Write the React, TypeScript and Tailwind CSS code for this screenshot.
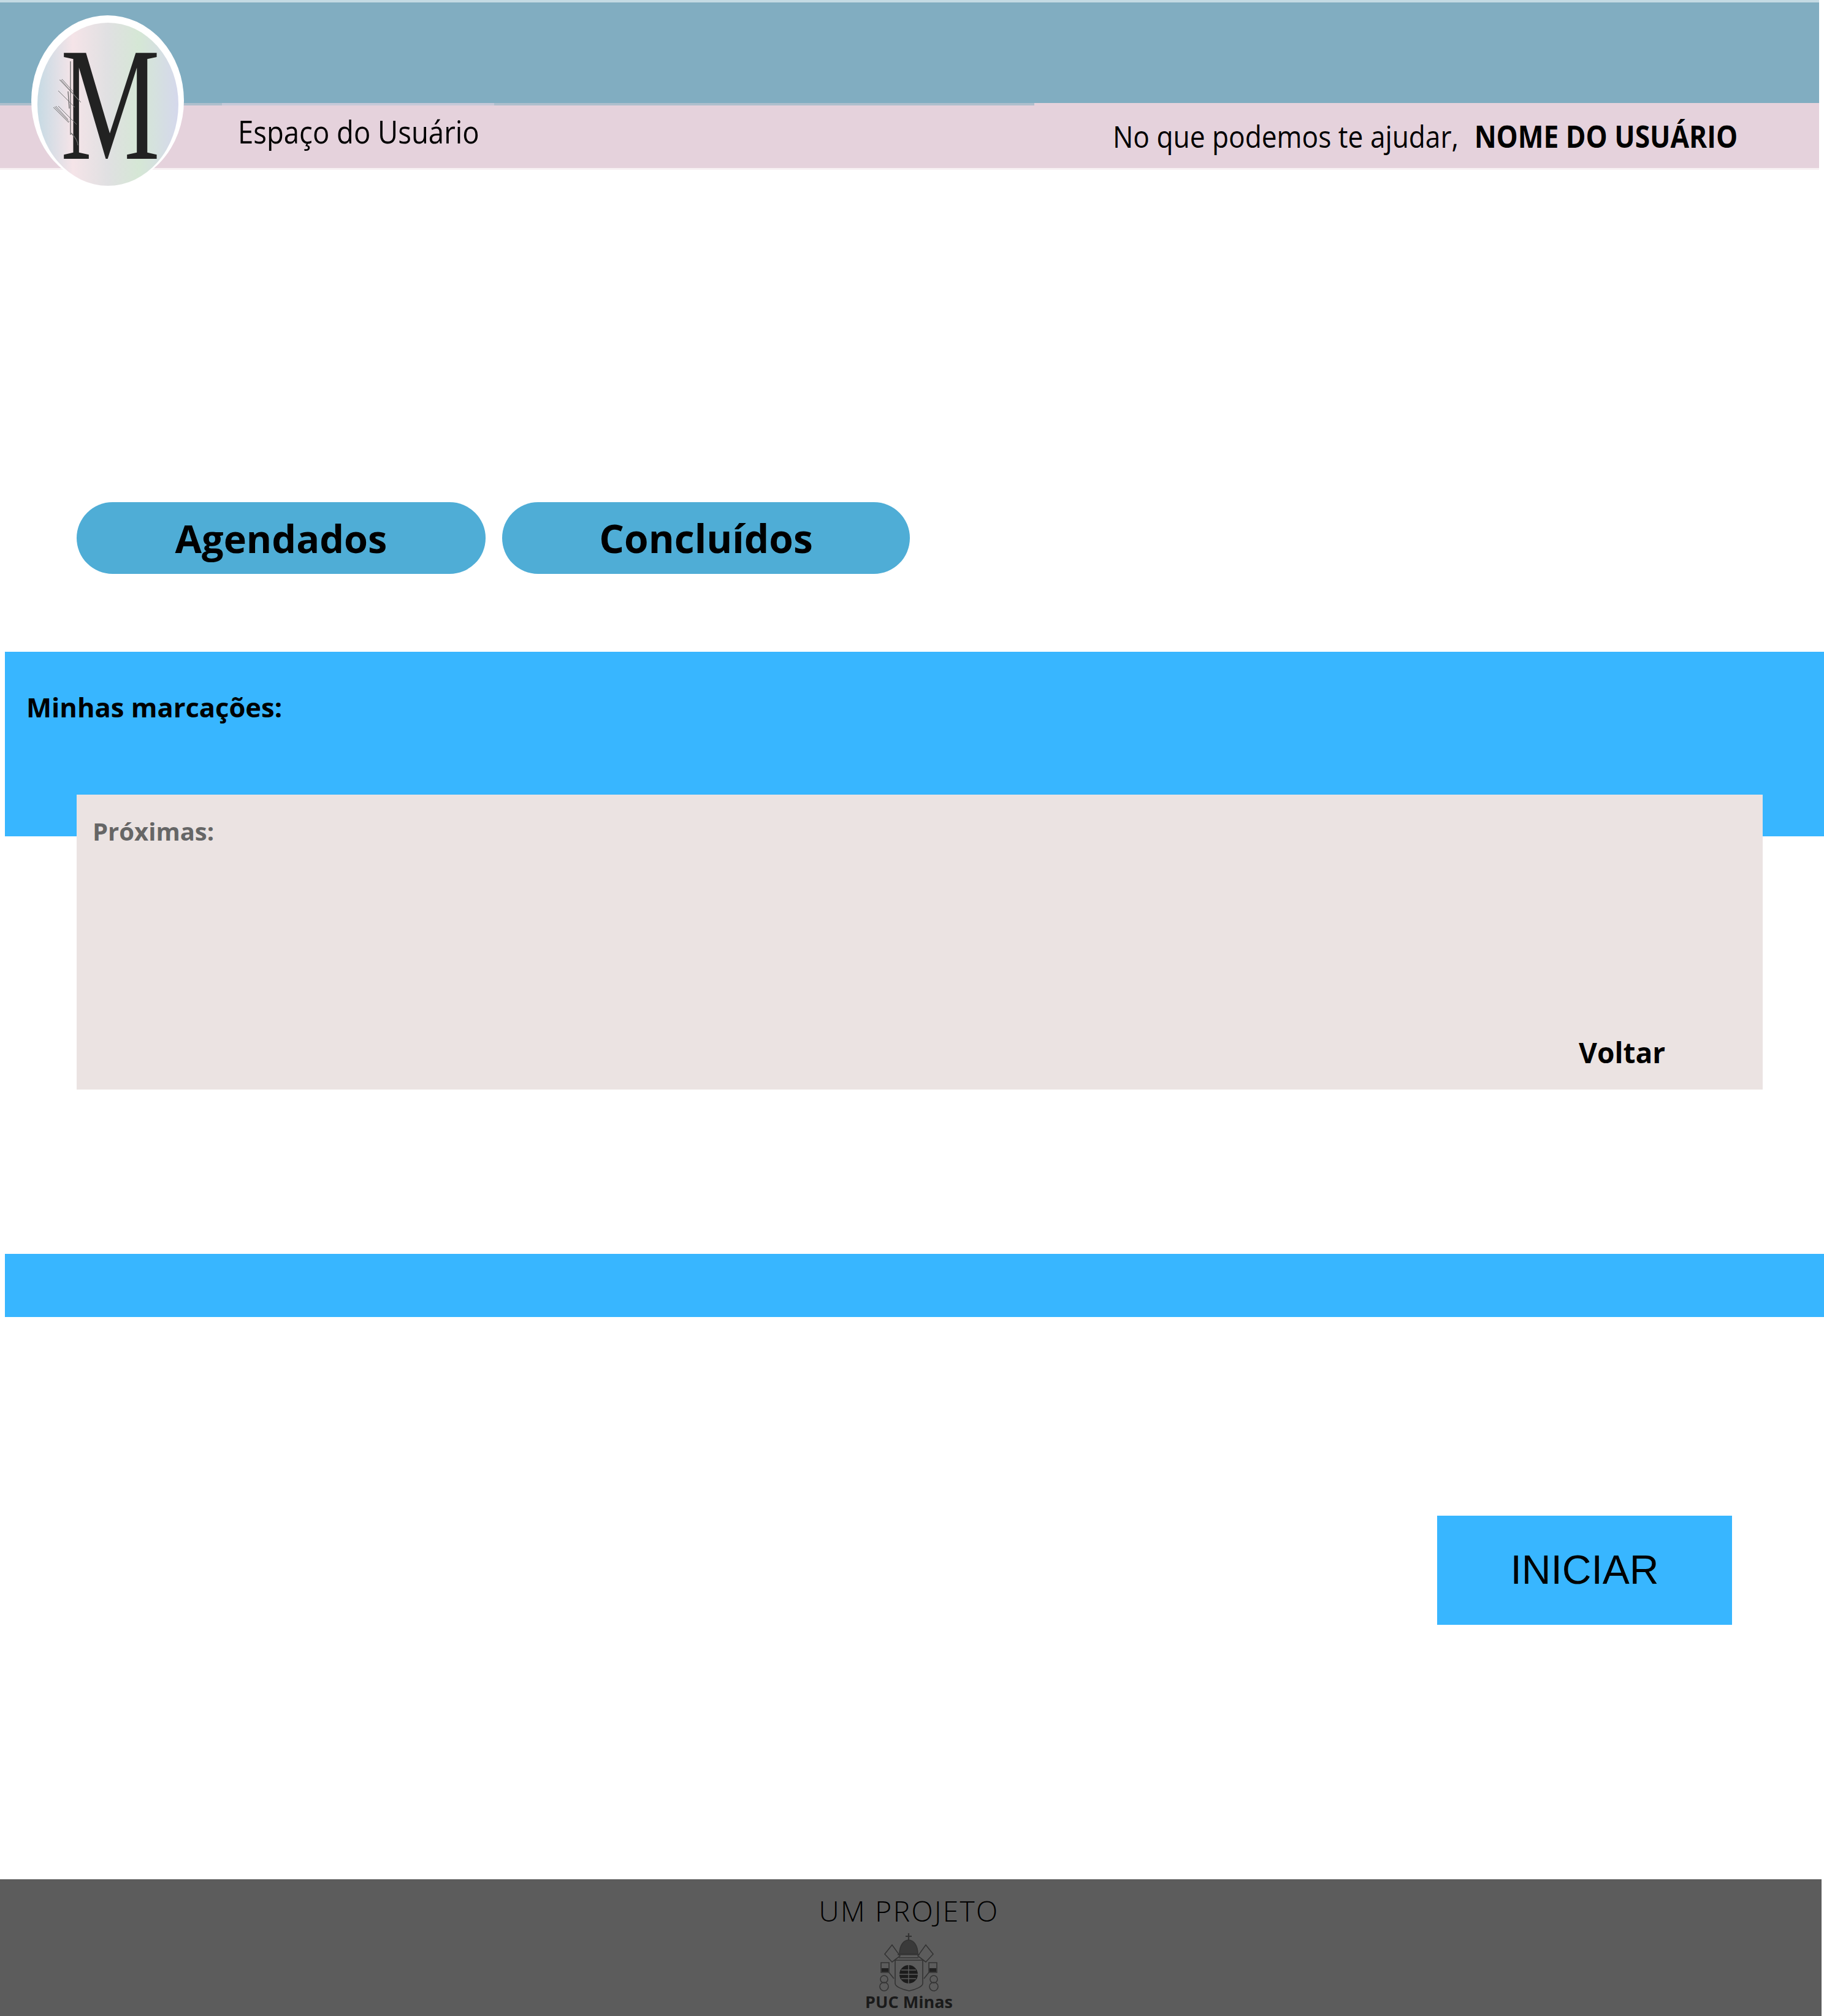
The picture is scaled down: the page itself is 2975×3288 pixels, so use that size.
function MLogo() {
  return (
    <div className="absolute left-[51px] top-[25px] w-[249px] h-[278px] rounded-[50%] bg-white flex items-end justify-center">
      <div className="relative w-[230px] h-[266px] rounded-[50%] bg-[linear-gradient(90deg,#c6dae4_0%,#f5e4e8_25%,#e0e0e2_50%,#d5e7d5_72%,#d5d8ec_100%)]">
        <span className="absolute left-[6px] top-[1px] w-[206px] text-center text-[264px] leading-none text-[#222222] origin-center scale-x-[0.69] [font-family:'Liberation_Serif',serif]">M</span>
        <svg className="absolute left-0 top-0 w-[230px] h-[266px]" viewBox="0 0 230 266" fill="none" stroke="#777777" strokeWidth="1">
          <path d="M36 93l35 37M38 93l32 36M40 92l18 20M34 111l27 27M26 138l25 25M28 137l24 25M30 136l20 22M34 136l30 30" />
          <path d="M54 63v120M55 180c6 6 11 12 11 20M50 112l2 28" strokeWidth="1.3" stroke="#666666" />
        </svg>
      </div>
    </div>
  );
}

function PucCrest() {
  return (
    <svg className="w-[125px] h-[110px] -mt-[2px]" viewBox="0 0 125 110" fill="none" stroke="#333333" strokeWidth="1.6">
      <path d="M62 8v12M57 13h10" strokeWidth="2.2" />
      <path d="M47 42c0-14 7-23 15-23s15 9 15 23z" fill="#3a3a3a" />
      <path d="M44 43h36M46 48h32" />
      <path d="M23 42l12-15 13 18-13 10zM102 42L90 27 77 45l13 10z" />
      <path d="M40 52h45v38c0 5-12 10-22 12-11-2-23-7-23-12z" />
      <circle cx="62" cy="75" r="15" fill="#1c1c1c" stroke="none" />
      <path d="M62 60v30M50 68h24M47 75h30M50 82h24" stroke="#5c5c5c" strokeWidth="1.4" />
      <path d="M17 56h13v16H17zM95 56h13v16H95z" />
      <path d="M18 68h11M96 68h11" strokeWidth="6" stroke="#222222" />
      <circle cx="22" cy="83" r="6" />
      <circle cx="103" cy="83" r="6" />
      <circle cx="22" cy="95" r="7" />
      <circle cx="103" cy="95" r="7" />
      <path d="M30 72l8 10M95 72l-8 10" />
    </svg>
  );
}

export default function App() {
  return (
    <div className="relative w-[2975px] h-[3288px] bg-white flex flex-col text-black [font-family:'Open_Sans',sans-serif]">
      <header className="w-[2967px] shrink-0">
        <div className="h-[4px] bg-[#c4dae3]" />
        <div className="h-[164px] bg-[#81adc1]" />
        <div className="h-[106px] bg-[#e5d2dc]">
          <div className="flex h-[4px]">
            <div className="w-[362px] bg-[#aebfcd]" />
            <div className="w-[444px] bg-[#c6c9d8]" />
            <div className="w-[881px] bg-[#aebfcd]" />
          </div>
          <div className="flex">
            <span className="ml-[388px] mt-[6px] text-[52px] leading-[72px] whitespace-nowrap origin-left scale-x-[0.875]">Espaço do Usuário</span>
            <div className="absolute left-[1815px] top-[186px] flex whitespace-nowrap text-[50px] leading-[72px] origin-left scale-x-[0.885]">
              <span>No que podemos te ajudar,</span>
              <span className="ml-[29px] font-bold">NOME DO USUÁRIO</span>
            </div>
          </div>
        </div>
        <div className="h-[3px] bg-[#f7f0f3]" />
      </header>
      <MLogo />

      <div className="mt-[542px] ml-[125px] flex gap-[27px]">
        <button className="w-[667px] h-[117px] rounded-full bg-[#4fadd6] text-[63px] font-bold leading-none">Agendados</button>
        <button className="w-[665px] h-[117px] rounded-full bg-[#4fadd6] text-[64px] font-bold leading-none">Concluídos</button>
      </div>

      <section className="mt-[127px] ml-[8px] h-[301px] bg-[#38b6ff] relative">
        <h2 className="ml-[35px] pt-[62px] text-[43.5px] leading-[58px] font-bold">Minhas marcações:</h2>
        <div className="absolute left-[117px] top-[233px] w-[2750px] h-[481px] bg-[#ebe3e2] flex flex-col">
          <p className="ml-[26px] mt-[32px] text-[40px] leading-[56px] font-bold text-[#666666]">Próximas:</p>
          <p className="mt-auto mb-[29px] ml-[2450px] text-[46px] leading-[64px] font-bold">Voltar</p>
        </div>
      </section>

      <div className="mt-[681px] ml-[8px] h-[103px] bg-[#38b6ff] shrink-0" />

      <div className="mt-[324px] ml-[2344px] w-[481px] h-[179px] bg-[#38b6ff] flex items-center justify-center text-[66px] [font-family:'Liberation_Sans',sans-serif]">INICIAR</div>

      <footer className="mt-[415px] w-[2971px] h-[223px] pr-[6px] bg-[#5c5c5c] flex flex-col items-center text-[#111111]">
        <p className="mt-[20px] text-[46px] leading-[62px] font-light text-black tracking-[2.4px]">UM PROJETO</p>
        <PucCrest />
        <p className="-mt-[6px] text-[27px] leading-[32px] font-bold text-[#1a1a1a]">PUC Minas</p>
      </footer>
    </div>
  );
}
